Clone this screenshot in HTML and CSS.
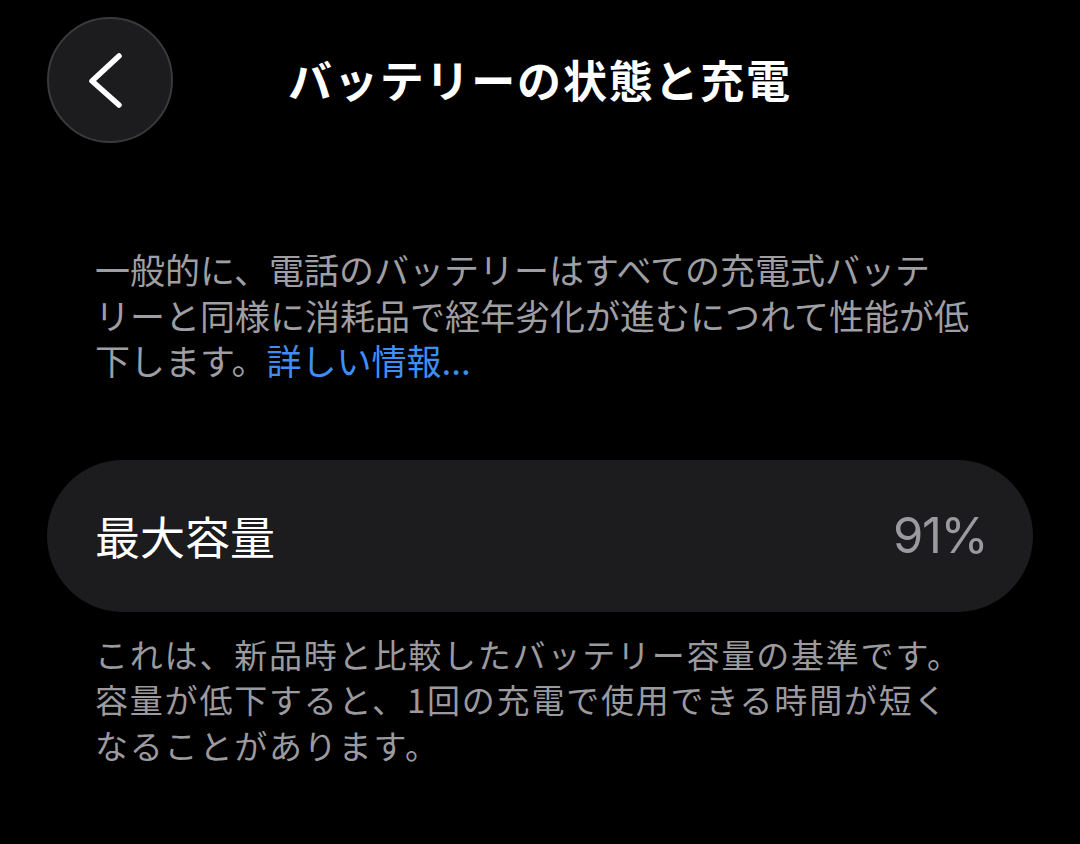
FILE: index.html
```html
<!DOCTYPE html>
<html lang="ja">
<head>
<meta charset="utf-8">
<title>バッテリーの状態と充電</title>
<link rel="stylesheet" href="styles.css">
</head>
<body>
<header class="nav">
  <div class="nav-left">
    <button class="back" aria-label="戻る">
      <svg width="122" height="122" viewBox="0 0 122 122">
        <path d="M70 37 L43 62 L70 86" fill="none" stroke="#ffffff" stroke-width="5.5" stroke-linecap="round" stroke-linejoin="round"/>
      </svg>
    </button>
  </div>
  <h1 class="title">バッテリーの状態と充電</h1>
  <div class="nav-right"></div>
</header>

<p class="intro">一般的に、電話のバッテリーはすべての充電式バッテ<br>リーと同様に消耗品で経年劣化が進むにつれて性能が低<br>下します。<a class="link" href="#">詳しい情報...</a></p>

<section class="card">
  <span class="card-label">最大容量</span>
  <span class="card-value">91%</span>
</section>

<p class="note">これは、新品時と比較したバッテリー容量の基準です。<br>容量が低下すると、1回の充電で使用できる時間が短く<br>なることがあります。</p>
</body>
</html>
```

FILE: styles.css
```css
html, body {
  margin: 0;
  padding: 0;
  background: #000000;
}

body {
  width: 1080px;
  height: 844px;
  overflow: hidden;
  font-family: "Noto Sans CJK JP", "Noto Sans", sans-serif;
  color: #ffffff;
}

.nav {
  display: grid;
  grid-template-columns: 1fr auto 1fr;
  height: 160px;
}

.nav-left {
  padding-left: 47px;
  margin-top: 17px;
}

.back {
  width: 126px;
  height: 126px;
  border-radius: 50%;
  background: #1c1c1e;
  border: 2px solid #3a3a3c;
  padding: 0;
  display: flex;
  align-items: center;
  justify-content: center;
}

.back svg {
  display: block;
}

.title {
  margin: 49px 0 0 0;
  font-size: 44px;
  font-weight: 700;
  letter-spacing: 1.8px;
  line-height: 60px;
  color: #ffffff;
}

.intro {
  margin: 86px 0 0 0;
  padding-left: 95px;
  font-size: 35px;
  line-height: 45.5px;
  letter-spacing: 0;
  color: #9e9ea3;
}

.link {
  color: #3d8ff5;
  text-decoration: none;
}

.card {
  display: flex;
  align-items: center;
  justify-content: space-between;
  margin: 77px 47px 0 47px;
  height: 152px;
  border-radius: 76px;
  background: #1c1c1e;
  padding: 0 46px 0 48px;
}

.card-label {
  font-size: 45px;
  line-height: 60px;
  color: #ffffff;
}

.card-value {
  font-family: "Inter", "Liberation Sans", sans-serif;
  font-size: 49px;
  line-height: 60px;
  letter-spacing: -1.5px;
  color: #9a9a9f;
}

.note {
  margin: 20px 0 0 0;
  padding-left: 95px;
  font-size: 33px;
  line-height: 45.5px;
  letter-spacing: 1.8px;
  color: #9a9a9f;
}
```
